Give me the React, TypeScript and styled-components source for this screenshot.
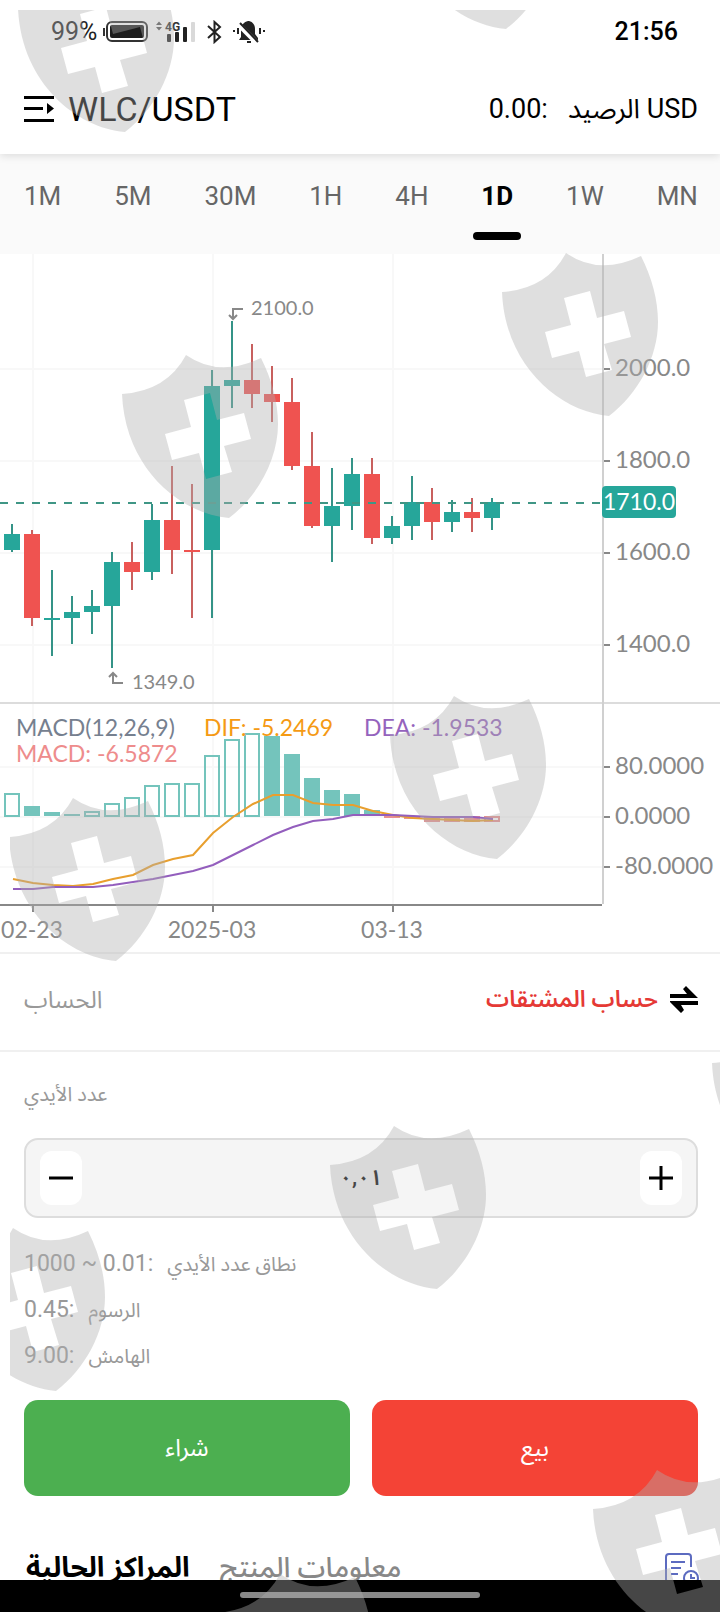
import React from 'react';
import styled, { createGlobalStyle, css } from 'styled-components';

const TEAL = '#26a69a';
const RED = '#ef5350';

const GlobalStyle = createGlobalStyle`
  * { box-sizing: border-box; }
  body { margin: 0; background: #fff; font-family: Roboto, 'Noto Sans Arabic', 'DejaVu Sans', sans-serif; color: #000; }
  button, input { font: inherit; color: inherit; }
  button { border: 0; padding: 0; background: none; cursor: pointer; }
  svg { display: block; }
`;

const Screen = styled.div`
  position: relative;
  display: flex;
  flex-direction: column;
  height: 100vh;
  overflow: hidden;
`;

const StatusBar = styled.div`
  position: relative;
  z-index: 1;
  display: flex;
  justify-content: space-between;
  align-items: center;
  flex: none;
  height: 64px;
  padding: 0 42px 0 51px;
  background: #fff;
  font-size: 25px;
  line-height: 32px;
`;

const StatusLeft = styled.div`
  display: flex;
  align-items: center;
  gap: 6px;
  color: #222;
`;

const Clock = styled.time`
  font-weight: 500;
`;

const Header = styled.header`
  position: relative;
  display: flex;
  justify-content: space-between;
  align-items: center;
  flex: none;
  height: 90px;
  padding: 0 22px 0 24px;
  box-shadow: 0 2px 8px rgba(0, 0, 0, 0.12);
`;

const PairButton = styled.button`
  display: flex;
  align-items: center;
  gap: 14px;
  line-height: 40px;
`;

const Pair = styled.span`
  font-size: 34px;
`;

const Balance = styled.div`
  display: flex;
  gap: 20px;
  font-size: 27px;
  line-height: 36px;
`;

const Main = styled.main`
  flex: 1;
  min-height: 0;
  overflow-y: auto;
  scrollbar-width: none;
`;

const Intervals = styled.nav`
  display: flex;
  justify-content: space-between;
  height: 100px;
  padding: 24px 22px 0 24px;
  background: #fafafa;
`;

const Interval = styled.button<{ $active?: boolean }>`
  position: relative;
  height: 36px;
  font-size: 26px;
  line-height: 36px;
  color: #666;
  ${(p) =>
    p.$active &&
    css`
      color: #000;
      font-weight: 700;
      &::after {
        content: '';
        position: absolute;
        left: 50%;
        top: 54px;
        width: 48px;
        height: 8px;
        margin-left: -24px;
        border-radius: 4px;
        background: #000;
      }
    `}
`;

const Chart = styled.svg`
  width: 100%;
  height: auto;
  font-family: Lato, sans-serif;
  font-size: 24px;
  fill: #888;
`;

const AccountRow = styled.section`
  display: flex;
  justify-content: space-between;
  align-items: center;
  height: 100px;
  padding: 0 22px 4px 24px;
  border-top: 2px solid #f0f0f0;
  border-bottom: 2px solid #f0f0f0;
  font-size: 24px;
  line-height: 36px;
`;

const Muted = styled.span`
  color: #999;
`;

const AccountButton = styled.button`
  display: flex;
  align-items: center;
  gap: 12px;
  font-size: 23px;
  font-weight: 600;
  color: #e53935;
`;

const Order = styled.form`
  display: flex;
  flex-direction: column;
  padding: 24px 22px 0 24px;
`;

const FieldLabel = styled.label`
  align-self: flex-start;
  font-size: 20px;
  line-height: 36px;
  color: #999;
`;

const Stepper = styled.div`
  display: flex;
  justify-content: space-between;
  align-items: center;
  height: 80px;
  margin-top: 26px;
  padding: 0 14px;
  border: 2px solid #ddd;
  border-radius: 14px;
  background: #f5f5f5;
`;

const StepButton = styled.button`
  display: grid;
  place-items: center;
  width: 42px;
  height: 54px;
  border-radius: 12px;
  background: #fff;
`;

const Amount = styled.input`
  flex: 1;
  min-width: 0;
  border: 0;
  outline: 0;
  background: none;
  text-align: center;
  font-size: 22px;
  font-weight: 600;
  line-height: 36px;
`;

const Facts = styled.dl`
  display: flex;
  flex-direction: column;
  align-items: flex-start;
  gap: 10px;
  margin: 28px 0 0;
  color: #999;
`;

const Fact = styled.div`
  display: flex;
  gap: 14px;
  font-size: 20px;
  line-height: 36px;
`;

const FactValue = styled.dd`
  margin: 0;
  font-size: 23px;
`;

const Actions = styled.div`
  display: flex;
  gap: 22px;
  margin-top: 26px;
`;

const TradeButton = styled.button<{ $tone: string }>`
  flex: 1;
  height: 96px;
  border-radius: 14px;
  background: ${(p) => p.$tone};
  color: #fff;
  font-size: 24px;
`;

const Positions = styled.section`
  display: flex;
  align-items: center;
  gap: 30px;
  height: 60px;
  margin-top: 42px;
  padding: 0 20px 0 26px;
`;

const PositionTab = styled.button<{ $active?: boolean }>`
  font-size: 28px;
  line-height: 48px;
  color: ${(p) => (p.$active ? '#000' : '#888')};
  font-weight: ${(p) => (p.$active ? 700 : 500)};
`;

const HistoryButton = styled.button`
  margin-left: auto;
`;

const GestureBar = styled.div`
  display: flex;
  flex: none;
  justify-content: center;
  height: 32px;
  padding-top: 12px;
  background: #000;
`;

const Pill = styled.div`
  width: 33.33%;
  height: 6px;
  border-radius: 3px;
  background: #888;
`;

const Watermark = styled.svg`
  position: absolute;
  z-index: 2;
  inset: 10px 0 0 10px;
  width: calc(100% - 10px);
  height: calc(100% - 10px);
  overflow: hidden;
  pointer-events: none;
  fill: rgba(176, 176, 176, 0.4);
`;

type Bar = [up: 0 | 1, top: number, bottom: number, high: number, low: number];

const candles: Bar[] = [
  [1, 534, 550, 524, 552],
  [0, 534, 618, 530, 626],
  [1, 618, 620, 570, 656],
  [1, 612, 618, 596, 644],
  [1, 606, 612, 590, 634],
  [1, 562, 606, 552, 668],
  [0, 562, 572, 542, 590],
  [1, 520, 572, 504, 580],
  [0, 520, 550, 466, 574],
  [0, 550, 552, 484, 618],
  [1, 386, 550, 370, 618],
  [1, 380, 386, 321, 408],
  [0, 380, 394, 344, 408],
  [0, 394, 402, 366, 422],
  [0, 402, 466, 378, 470],
  [0, 466, 526, 432, 528],
  [1, 506, 526, 468, 562],
  [1, 474, 506, 458, 530],
  [0, 474, 538, 458, 544],
  [1, 526, 538, 516, 544],
  [1, 502, 526, 476, 540],
  [0, 502, 522, 488, 540],
  [1, 512, 522, 500, 532],
  [0, 512, 518, 498, 532],
  [1, 502, 518, 498, 530],
];

// Each MACD bar: the y of its far end, and whether it is hollow (rising).
const macd: [number, 0 | 1][] = [
  [793, 1], [806, 0], [812, 0], [814, 0], [811, 1], [803, 1], [797, 1], [785, 1],
  [783, 1], [783, 1], [755, 1], [739, 1], [733, 1], [736, 0], [754, 0], [778, 0],
  [790, 0], [794, 0], [810, 0], [818, 0], [819, 0], [822, 0], [822, 0], [822, 0], [821, 1],
];
const MACD_ZERO = 816;

const dif = [879, 883, 885, 886, 884, 879, 875, 865, 859, 855, 833, 817, 804, 795, 795, 803, 805, 805, 811, 815, 818, 819, 820, 821, 820];
const dea = [889, 889, 887, 887, 887, 885, 882, 879, 875, 871, 865, 855, 845, 835, 827, 821, 819, 815, 815, 815, 816, 817, 817, 817, 819];

const toPoints = (ys: number[]) => ys.map((y, i) => `${13 + i * 20},${y}`).join(' ');

const priceTicks: [number, string][] = [
  [369, '2000.0'], [461, '1800.0'], [553, '1600.0'], [645, '1400.0'],
  [767, '80.0000'], [817, '0.0000'], [867, '-80.0000'],
];
const dateTicks: [number, string][] = [[33, '02-23'], [213, '2025-03'], [393, '03-13']];

const shields = [
  [18, -32], [399, -135], [502, 252], [122, 354], [390, 695], [9, 797],
  [712, 1023], [330, 1125], [-51, 1227], [593, 1469], [216, 1573],
];

function PriceChart() {
  return (
    <Chart viewBox="0 254 720 698" role="img" aria-label="WLC/USDT 1D">
      <g fill="#f8f8f8">
        {dateTicks.map(([x]) => <rect key={x} x={x - 1} y={254} width={2} height={651} />)}
        {priceTicks.map(([y]) => <rect key={y} x={0} y={y - 1} width={602} height={2} />)}
      </g>
      <rect x={0} y={702} width={720} height={2} fill="#dcdcdc" />
      <rect x={602} y={254} width={2} height={650} fill="#d0d0d0" />
      <rect x={0} y={904} width={602} height={2} />
      {dateTicks.map(([x, label]) => (
        <g key={label}>
          <rect x={x - 1} y={906} width={2} height={6} />
          <text x={x - 1} y={938} textAnchor="middle" fontSize={23}>{label}</text>
        </g>
      ))}
      {priceTicks.map(([y, label]) => (
        <g key={label}>
          <rect x={604} y={y - 1} width={6} height={2} />
          <text x={615} y={y + 7}>{label}</text>
        </g>
      ))}

      {candles.map(([up, top, bottom, high, low], i) => (
        <g key={i}>
          <rect x={11 + i * 20} y={high} width={2} height={low - high} fill={up ? '#349387' : '#c8605e'} />
          <rect x={4 + i * 20} y={top} width={16} height={bottom - top} fill={up ? TEAL : RED} />
        </g>
      ))}
      <path d="M0 503H602" stroke="#3f9685" strokeWidth={2} strokeDasharray="8 8" />
      <rect x={602} y={486} width={74} height={32} rx={4} fill={TEAL} />
      <text x={639} y={510} textAnchor="middle" fill="#fff" fontSize={23}>1710.0</text>

      <g fill="none" stroke="#888" strokeWidth={2}>
        <path d="M243 309H233V319M229 315L233 319L237 315" />
        <path d="M123 683H113V673M109 677L113 673L117 677" />
      </g>
      <text x={251} y={315} fontSize={20}>2100.0</text>
      <text x={132} y={689} fontSize={20}>1349.0</text>

      {macd.map(([end, hollow], i) => {
        const y = Math.min(end, MACD_ZERO);
        const h = Math.abs(end - MACD_ZERO);
        const color = end > MACD_ZERO ? '#e89090' : '#74c4bc';
        return hollow ? (
          <rect key={i} x={5 + i * 20} y={y + 1} width={14} height={h - 1} fill="none" stroke={color} strokeWidth={2} />
        ) : (
          <rect key={i} x={4 + i * 20} y={y} width={16} height={h} fill={color} />
        );
      })}
      <polyline points={toPoints(dif)} fill="none" stroke="#e89f2e" strokeWidth={2} />
      <polyline points={toPoints(dea)} fill="none" stroke="#935ebd" strokeWidth={2} />
      <g fontSize={23}>
        <text x={16} y={736} fill="#76808f">MACD(12,26,9)</text>
        <text x={204} y={736} fill="#f59a14">DIF: -5.2469</text>
        <text x={364} y={736} fill="#9563bd">DEA: -1.9533</text>
        <text x={16} y={762} fill="#ee8c8c">MACD: -6.5872</text>
      </g>
    </Chart>
  );
}

function StatusIcons() {
  return (
    <svg width="164" height="24" viewBox="102 20 164 24" aria-hidden="true">
      <rect x="102" y="28" width="2" height="8" fill="#333" />
      <rect x="106" y="22" width="40" height="19" rx="5" fill="none" stroke="#333" strokeWidth="2" />
      <rect x="109" y="25" width="34" height="13" rx="2" fill="#1d1d1d" />
      <path d="M155 25L158 21.500L161 25ZM155 27L158 30.500L161 27Z" fill="#555" />
      <text x="164" y="31" fontSize="12" fontWeight="700" fill="#333">4G</text>
      <g fill="#222">
        <rect x="166" y="34" width="4" height="8" rx="1" />
        <rect x="174" y="32" width="4" height="10" rx="1" />
        <rect x="182" y="27" width="4" height="15" rx="1" />
        <rect x="190" y="22" width="4" height="20" rx="1" fill="#d9d9d9" />
      </g>
      <path d="M207 26L219 37L213.500 42V22L219 27L207 38" fill="none" stroke="#222" strokeWidth="2" />
      <path d="M248 21C252 22 254 25 254 29V34L257 38V40H238L240 37V29C240 25 243 22 247 21ZM246 41H250V43H246Z" fill="#222" />
      <path d="M237 24L256 43" stroke="#fff" strokeWidth="5" />
      <path d="M239 23L257 42M237 28V34M233 30V32M259 28V34M263 30V32" stroke="#222" strokeWidth="2" />
    </svg>
  );
}

export default function App() {
  return (
    <>
      <GlobalStyle />
      <Screen>
        <StatusBar>
          <StatusLeft>
            <span>99%</span>
            <StatusIcons />
          </StatusLeft>
          <Clock>21:56</Clock>
        </StatusBar>

        <Header>
          <PairButton type="button">
            <svg width="30" height="28" viewBox="0 0 30 28" aria-hidden="true">
              <path d="M0 1h30v3H0zM0 12h19v3H0zM0 24h30v3H0zM23 8l7 5.500-7 5.500z" />
            </svg>
            <Pair>WLC/USDT</Pair>
          </PairButton>
          <Balance dir="rtl">
            <span>USD الرصيد</span>
            <span>:0.00</span>
          </Balance>
        </Header>

        <Main>
          <Intervals>
            {['1M', '5M', '30M', '1H', '4H', '1D', '1W', 'MN'].map((name) => (
              <Interval key={name} type="button" $active={name === '1D'}>{name}</Interval>
            ))}
          </Intervals>

          <PriceChart />

          <AccountRow>
            <Muted dir="rtl">الحساب</Muted>
            <AccountButton type="button">
              <span dir="rtl">حساب المشتقات</span>
              <svg width="28" height="28" viewBox="0 0 28 28" fill="#000" aria-hidden="true">
                <path d="M0 8H17L13 3L16 0L28 12H0ZM0 15H28V19H11L14 24L11 27L0 16Z" />
              </svg>
            </AccountButton>
          </AccountRow>

          <Order onSubmit={(e) => e.preventDefault()}>
            <FieldLabel htmlFor="lots" dir="rtl">عدد الأيدي</FieldLabel>
            <Stepper>
              <StepButton type="button" aria-label="−">
                <svg width="24" height="24" aria-hidden="true"><path d="M0 12H24" stroke="#000" strokeWidth="3" /></svg>
              </StepButton>
              <Amount id="lots" inputMode="decimal" defaultValue="٠,٠١" />
              <StepButton type="button" aria-label="+">
                <svg width="24" height="24" aria-hidden="true"><path d="M0 12H24M12 0V24" stroke="#000" strokeWidth="3" /></svg>
              </StepButton>
            </Stepper>
            <Facts>
              <Fact dir="rtl"><dt>نطاق عدد الأيدي</dt><FactValue>:0.01 ~ 1000</FactValue></Fact>
              <Fact dir="rtl"><dt>الرسوم</dt><FactValue>:0.45</FactValue></Fact>
              <Fact dir="rtl"><dt>الهامش</dt><FactValue>:9.00</FactValue></Fact>
            </Facts>
            <Actions>
              <TradeButton type="button" $tone="#4caf50">شراء</TradeButton>
              <TradeButton type="button" $tone="#f44336">بيع</TradeButton>
            </Actions>
          </Order>

          <Positions>
            <PositionTab type="button" $active>المراكز الحالية</PositionTab>
            <PositionTab type="button">معلومات المنتج</PositionTab>
            <HistoryButton type="button" aria-label="السجل">
              <svg width="36" height="32" viewBox="0 0 36 32" fill="none" stroke="#5c6bc0" strokeWidth="2" aria-hidden="true">
                <path d="M27 15V5Q27 2 24 2H5Q2 2 2 5V27Q2 30 5 30H17M7 10H21M7 16H17M7 22H14" />
                <circle cx="27" cy="26" r="7" />
                <path d="M27 22V26H31" />
              </svg>
            </HistoryButton>
          </Positions>
        </Main>

        <GestureBar><Pill /></GestureBar>

        <Watermark aria-hidden="true">
          {shields.map(([x, y]) => (
            <path
              key={`${x},${y}`}
              transform={`translate(${x - 10} ${y - 10})`}
              fillRule="evenodd"
              d="M0 40Q45 37 64 1Q97 24 139 4C150 26 156 48 156 70C156 105 136 142 107 164C58 160 3 114 0 40ZM62 46L88 39L95 66L122 59L129 85L102 92L110 118L84 125L77 99L50 106L43 80L69 73Z"
            />
          ))}
        </Watermark>
      </Screen>
    </>
  );
}
